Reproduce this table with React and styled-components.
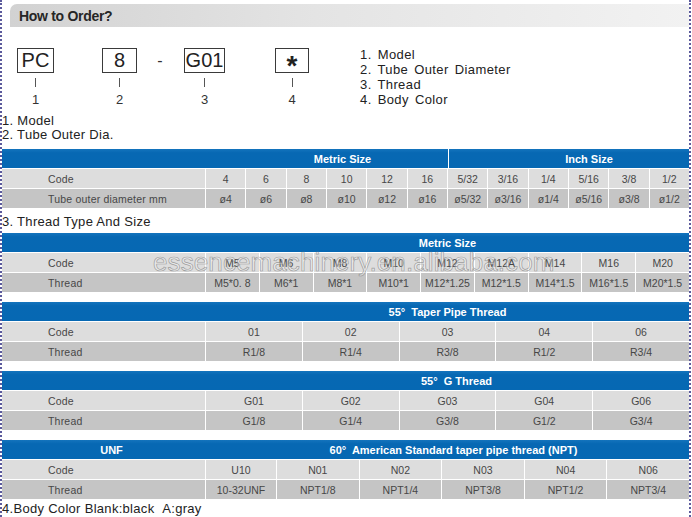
import React from 'react';
import styled, { createGlobalStyle } from 'styled-components';

const GlobalStyle = createGlobalStyle`
  html, body {
    margin: 0;
    padding: 0;
    background: #ffffff;
  }
  body {
    font-family: "Liberation Sans", Arial, sans-serif;
    color: #222222;
  }
`;

const Page = styled.div`
  position: relative;
  box-sizing: border-box;
  width: 691px;
  height: 517px;
  border-left: 2px dotted #5b5a9c;
  border-right: 2px dotted #5b5a9c;
  overflow: hidden;
`;

const TitleBar = styled.div`
  margin: 4px 0 0 8px;
  height: 23px;
  padding-left: 9px;
  display: flex;
  align-items: center;
  border-radius: 7px 0 0 0;
  background: linear-gradient(90deg, #d2d2d2 0%, #e4e4e4 45%, #f2f2f2 100%);
  font-size: 14px;
  font-weight: bold;
  color: #262626;
  letter-spacing: -0.3px;
`;

const OrderSection = styled.div`
  display: flex;
  align-items: flex-start;
  height: 87px;
`;

const CodeArea = styled.div`
  display: flex;
  align-items: flex-start;
  margin-top: 21px;
  padding-left: 15px;
`;

const CodeItem = styled.div`
  display: flex;
  flex-direction: column;
  align-items: center;
  margin-left: ${p => p.$ml || 0}px;
`;

const CodeBox = styled.div`
  box-sizing: border-box;
  width: ${p => p.$w}px;
  height: 25px;
  border: 1px solid #3a3a3a;
  display: flex;
  align-items: center;
  justify-content: center;
  font-size: 20px;
  color: #222;
`;

const Star = styled.span`
  font-size: 28px;
  font-weight: bold;
  line-height: 1;
  margin-top: 10px;
`;

const Tick = styled.div`
  width: 1px;
  height: 9px;
  margin-top: 5px;
  background: #555;
`;

const CodeNum = styled.div`
  margin-top: 6px;
  font-size: 13px;
  line-height: 14px;
  color: #333;
`;

const Dash = styled.div`
  width: 6px;
  height: 25px;
  margin: 0 21px 0 20px;
  display: flex;
  align-items: center;
  justify-content: center;
  font-size: 16px;
  color: #333;
`;

const Legend = styled.div`
  margin: 20px 0 0 51px;
  font-size: 13px;
  line-height: 15px;
  letter-spacing: 0.4px;
  word-spacing: 2px;
  color: #222;
`;

const Note = styled.div`
  font-size: 13px;
  line-height: 14px;
  letter-spacing: 0.3px;
  color: #222;
  margin-top: ${p => p.$mt || 0}px;
`;

const Table = styled.div`
  margin-top: ${p => p.$mt || 0}px;
`;

const Grid = styled.div`
  display: grid;
  grid-template-columns: ${p => p.$cols};
  column-gap: 1px;
  height: 19px;
`;

const HeadRow = styled(Grid)`
  background: linear-gradient(#1474bd 0%, #0768b3 20%, #0668b3 100%);
  color: #ffffff;
  font-weight: bold;
  font-size: 11px;
`;

const HeadCell = styled.div`
  grid-column: ${p => p.$col};
  display: flex;
  align-items: center;
  justify-content: center;
  padding-left: ${p => p.$shift || 0}px;
  border-left: ${p => (p.$divider ? '1px solid #ffffff' : 'none')};
  white-space: pre;
`;

const BodyRow = styled(Grid)`
  margin-top: 1px;
  background: #ffffff;
`;

const Cell = styled.div`
  background: ${p => (p.$dark ? '#c5c5c5' : '#dddddd')};
  display: flex;
  align-items: center;
  justify-content: center;
  font-size: 10.5px;
  color: #474747;
  white-space: pre;
`;

const LabelCell = styled(Cell)`
  justify-content: flex-start;
  padding-left: 46px;
  letter-spacing: 0.2px;
`;

const Watermark = styled.div`
  position: absolute;
  left: 151px;
  top: 247px;
  font-size: 26px;
  line-height: 30px;
  letter-spacing: 0.1px;
  color: rgba(255, 255, 255, 0.35);
  -webkit-text-stroke: 0.7px rgba(125, 125, 125, 0.7);
  pointer-events: none;
`;

const DataTable = ({ cols, head, rows, mt }) => (
  <Table $mt={mt}>
    <HeadRow $cols={cols}>
      {head.map(h => (
        <HeadCell key={h.text} $col={h.col} $shift={h.shift} $divider={h.divider}>
          {h.text}
        </HeadCell>
      ))}
    </HeadRow>
    {rows.map((row, i) => (
      <BodyRow key={row[0]} $cols={cols}>
        <LabelCell $dark={i === 1}>{row[0]}</LabelCell>
        {row.slice(1).map((v, j) => (
          <Cell key={j} $dark={i === 1}>{v}</Cell>
        ))}
      </BodyRow>
    ))}
  </Table>
);

const tubeTable = {
  cols: '203px repeat(12, 1fr)',
  head: [
    { text: 'Metric Size', col: '2 / span 6', shift: 32 },
    { text: 'Inch Size', col: '8 / span 6', shift: 40, divider: true },
  ],
  rows: [
    ['Code', '4', '6', '8', '10', '12', '16', '5/32', '3/16', '1/4', '5/16', '3/8', '1/2'],
    ['Tube outer diameter mm', 'ø4', 'ø6', 'ø8', 'ø10', 'ø12', 'ø16', 'ø5/32', 'ø3/16', 'ø1/4', 'ø5/16', 'ø3/8', 'ø1/2'],
  ],
};

const metricTable = {
  cols: '203px repeat(9, 1fr)',
  head: [{ text: 'Metric Size', col: '2 / -1' }],
  rows: [
    ['Code', 'M5', 'M6', 'M8', 'M10', 'M12', 'M12A', 'M14', 'M16', 'M20'],
    ['Thread', 'M5*0. 8', 'M6*1', 'M8*1', 'M10*1', 'M12*1.25', 'M12*1.5', 'M14*1.5', 'M16*1.5', 'M20*1.5'],
  ],
};

const taperTable = {
  cols: '203px repeat(5, 1fr)',
  head: [{ text: '55°  Taper Pipe Thread', col: '2 / -1' }],
  rows: [
    ['Code', '01', '02', '03', '04', '06'],
    ['Thread', 'R1/8', 'R1/4', 'R3/8', 'R1/2', 'R3/4'],
  ],
};

const gTable = {
  cols: '203px repeat(5, 1fr)',
  head: [{ text: '55°  G Thread', col: '2 / -1', shift: 18 }],
  rows: [
    ['Code', 'G01', 'G02', 'G03', 'G04', 'G06'],
    ['Thread', 'G1/8', 'G1/4', 'G3/8', 'G1/2', 'G3/4'],
  ],
};

const nptTable = {
  cols: '203px 70px repeat(5, 1fr)',
  head: [
    { text: 'UNF', col: '1', shift: 16 },
    { text: '60°  American Standard taper pipe thread (NPT)', col: '2 / -1', shift: 12 },
  ],
  rows: [
    ['Code', 'U10', 'N01', 'N02', 'N03', 'N04', 'N06'],
    ['Thread', '10-32UNF', 'NPT1/8', 'NPT1/4', 'NPT3/8', 'NPT1/2', 'NPT3/4'],
  ],
};

export default function App() {
  return (
    <>
      <GlobalStyle />
      <Page>
        <TitleBar>How to Order?</TitleBar>
        <OrderSection>
          <CodeArea>
            <CodeItem>
              <CodeBox $w={37}>PC</CodeBox>
              <Tick />
              <CodeNum>1</CodeNum>
            </CodeItem>
            <CodeItem $ml={48}>
              <CodeBox $w={35}>8</CodeBox>
              <Tick />
              <CodeNum>2</CodeNum>
            </CodeItem>
            <Dash>-</Dash>
            <CodeItem>
              <CodeBox $w={41}>G01</CodeBox>
              <Tick />
              <CodeNum>3</CodeNum>
            </CodeItem>
            <CodeItem $ml={50}>
              <CodeBox $w={34}><Star>*</Star></CodeBox>
              <Tick />
              <CodeNum>4</CodeNum>
            </CodeItem>
          </CodeArea>
          <Legend>
            <div>1. Model</div>
            <div>2. Tube Outer Diameter</div>
            <div>3. Thread</div>
            <div>4. Body Color</div>
          </Legend>
        </OrderSection>
        <Note>1. Model</Note>
        <Note>2. Tube Outer Dia.</Note>
        <DataTable {...tubeTable} mt={7} />
        <Note $mt={7}>3. Thread Type And Size</Note>
        <DataTable {...metricTable} mt={4} />
        <DataTable {...taperTable} mt={10} />
        <DataTable {...gTable} mt={10} />
        <DataTable {...nptTable} mt={10} />
        <Note $mt={3}>4.Body Color Blank:black&nbsp;&nbsp;A:gray</Note>
        <Watermark>essencemachinery.en.alibaba.com</Watermark>
      </Page>
    </>
  );
}
